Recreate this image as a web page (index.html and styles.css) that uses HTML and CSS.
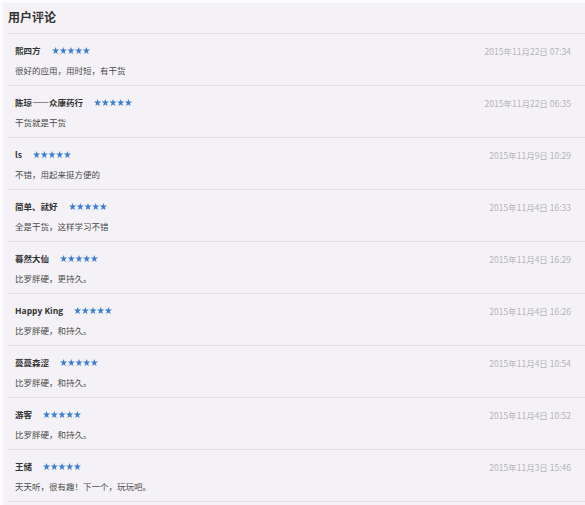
FILE: index.html
```html
<!DOCTYPE html>
<html lang="zh">
<head>
<meta charset="utf-8">
<link rel="stylesheet" href="styles.css">
</head>
<body>
<svg width="0" height="0" class="defs">
  <defs>
    <polygon id="st" points="3.6,0 4.5,2.5 7.2,2.6 5,4.3 5.8,7 3.6,5.4 1.4,7 2.2,4.3 0,2.6 2.7,2.5" />
  </defs>
</svg>
<div class="page">
  <div class="title">用户评论</div>
  <div class="list">
    <div class="row">
      <div class="top"><span class="name">熙四方</span><svg class="stars" width="38" height="7" viewBox="0 0 38 7"><use href="#st" x="0"/><use href="#st" x="7.7"/><use href="#st" x="15.4"/><use href="#st" x="23.1"/><use href="#st" x="30.8"/></svg><span class="date">2015年11月22日 07:34</span></div>
      <div class="text">很好的应用，用时短，有干货</div>
    </div>
    <div class="row">
      <div class="top"><span class="name">陈琼——众康药行</span><svg class="stars" width="38" height="7" viewBox="0 0 38 7"><use href="#st" x="0"/><use href="#st" x="7.7"/><use href="#st" x="15.4"/><use href="#st" x="23.1"/><use href="#st" x="30.8"/></svg><span class="date">2015年11月22日 06:35</span></div>
      <div class="text">干货就是干货</div>
    </div>
    <div class="row">
      <div class="top"><span class="name">ls</span><svg class="stars" width="38" height="7" viewBox="0 0 38 7"><use href="#st" x="0"/><use href="#st" x="7.7"/><use href="#st" x="15.4"/><use href="#st" x="23.1"/><use href="#st" x="30.8"/></svg><span class="date">2015年11月9日 10:29</span></div>
      <div class="text">不错，用起来挺方便的</div>
    </div>
    <div class="row">
      <div class="top"><span class="name">简单、就好</span><svg class="stars" width="38" height="7" viewBox="0 0 38 7"><use href="#st" x="0"/><use href="#st" x="7.7"/><use href="#st" x="15.4"/><use href="#st" x="23.1"/><use href="#st" x="30.8"/></svg><span class="date">2015年11月4日 16:33</span></div>
      <div class="text">全是干货，这样学习不错</div>
    </div>
    <div class="row">
      <div class="top"><span class="name">暮然大仙</span><svg class="stars" width="38" height="7" viewBox="0 0 38 7"><use href="#st" x="0"/><use href="#st" x="7.7"/><use href="#st" x="15.4"/><use href="#st" x="23.1"/><use href="#st" x="30.8"/></svg><span class="date">2015年11月4日 16:29</span></div>
      <div class="text">比罗胖硬，更持久。</div>
    </div>
    <div class="row">
      <div class="top"><span class="name latin">Happy King</span><svg class="stars" width="38" height="7" viewBox="0 0 38 7"><use href="#st" x="0"/><use href="#st" x="7.7"/><use href="#st" x="15.4"/><use href="#st" x="23.1"/><use href="#st" x="30.8"/></svg><span class="date">2015年11月4日 16:26</span></div>
      <div class="text">比罗胖硬，和持久。</div>
    </div>
    <div class="row">
      <div class="top"><span class="name">蔓蔓森涩</span><svg class="stars" width="38" height="7" viewBox="0 0 38 7"><use href="#st" x="0"/><use href="#st" x="7.7"/><use href="#st" x="15.4"/><use href="#st" x="23.1"/><use href="#st" x="30.8"/></svg><span class="date">2015年11月4日 10:54</span></div>
      <div class="text">比罗胖硬，和持久。</div>
    </div>
    <div class="row">
      <div class="top"><span class="name">游客</span><svg class="stars" width="38" height="7" viewBox="0 0 38 7"><use href="#st" x="0"/><use href="#st" x="7.7"/><use href="#st" x="15.4"/><use href="#st" x="23.1"/><use href="#st" x="30.8"/></svg><span class="date">2015年11月4日 10:52</span></div>
      <div class="text">比罗胖硬，和持久。</div>
    </div>
    <div class="row">
      <div class="top"><span class="name">王储</span><svg class="stars" width="38" height="7" viewBox="0 0 38 7"><use href="#st" x="0"/><use href="#st" x="7.7"/><use href="#st" x="15.4"/><use href="#st" x="23.1"/><use href="#st" x="30.8"/></svg><span class="date">2015年11月3日 15:46</span></div>
      <div class="text">天天听，很有趣！下一个，玩玩吧。</div>
    </div>
  </div>
</div>
</body>
</html>
```

FILE: styles.css
```css
html, body {
  margin: 0;
  padding: 0;
  background: #fbfafc;
}
.defs {
  position: absolute;
  width: 0;
  height: 0;
}
body {
  font-family: "Noto Sans CJK SC", "Liberation Sans", sans-serif;
  color: #333;
}
.page {
  margin: 3px 0 0 3px;
  background: #f4f2f6;
  height: 502px;
  padding-left: 5px;
  box-sizing: border-box;
}
.title {
  height: 26px;
  padding-bottom: 4px;
  display: flex;
  align-items: center;
  font-size: 12px;
  font-weight: bold;
  color: #333;
  border-bottom: 1px solid #dfdce3;
}
.row {
  height: 42px;
  border-bottom: 1px solid #e2dfe6;
  padding: 9px 14px 0 7px;
  display: flex;
  flex-direction: column;
}
.top {
  display: flex;
  align-items: center;
  height: 14px;
}
.name {
  font-size: 8.5px;
  font-weight: bold;
  color: #333;
  margin-right: 11px;
}
.name.latin {
  font-family: "Open Sans", "Liberation Sans", sans-serif;
}
.stars {
  fill: #3a7fd4;
  display: block;
}
.date {
  margin-left: auto;
  font-size: 8.5px;
  color: #b6b3b9;
  position: relative;
  top: 1px;
}
.text {
  margin-top: 6px;
  height: 14px;
  line-height: 14px;
  font-size: 8.5px;
  color: #4a4a4a;
}
```
